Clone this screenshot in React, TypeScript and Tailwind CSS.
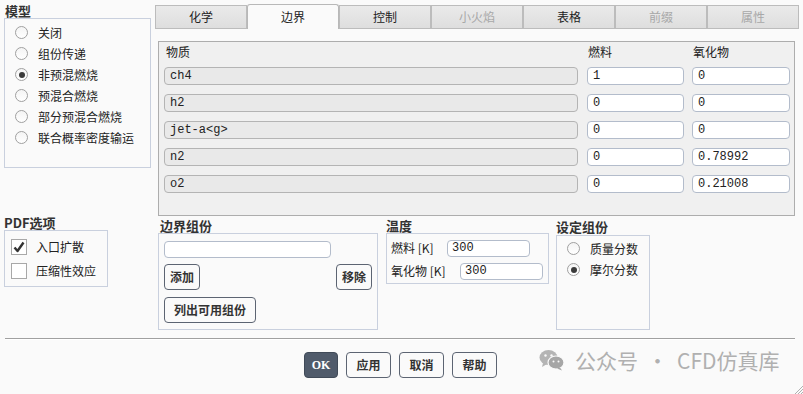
import React from "react";

const cjk = { fontFamily: '"Noto Sans CJK SC", "Noto Sans", sans-serif' };
const mono = { fontFamily: '"Liberation Mono", "Noto Sans CJK SC", monospace' };

function Radio({ checked, label }: { checked?: boolean; label: string }) {
  return (
    <div className="flex items-center h-[21px]">
      <div className="w-[13px] h-[13px] rounded-full border border-[#a0a0a0] bg-gradient-to-b from-[#f4f4f4] to-white flex items-center justify-center shrink-0">
        {checked && <div className="w-[6px] h-[6px] rounded-full bg-[#3a3a3a]" />}
      </div>
      <span className="ml-[10px] text-[12px] text-[#222] leading-none">{label}</span>
    </div>
  );
}

function Check({ checked, label }: { checked?: boolean; label: string }) {
  return (
    <div className="flex items-center h-[24px]">
      <div className="w-[16px] h-[16px] border border-[#a8a8a8] bg-white flex items-center justify-center shrink-0">
        {checked && (
          <svg width="12" height="12" viewBox="0 0 12 12">
            <path d="M1.5 6.5 L4.5 10 L10.5 1.5" fill="none" stroke="#333" strokeWidth="2.4" strokeLinejoin="round" />
          </svg>
        )}
      </div>
      <span className="ml-[9px] text-[12px] text-[#222] leading-none">{label}</span>
    </div>
  );
}

function Tab({ label, active, disabled }: { label: string; active?: boolean; disabled?: boolean }) {
  if (active)
    return (
      <div className="w-[92px] h-[25px] border border-[#b8b8b8] border-b-0 rounded-t-[3px] bg-[#fafafa] flex items-center justify-center text-[12px] text-[#222] relative z-10">
        {label}
      </div>
    );
  return (
    <div
      className={
        "w-[92px] h-[24px] mt-[1px] border border-[#bcbcbc] bg-gradient-to-b from-[#eaeaea] to-[#dedede] flex items-center justify-center text-[12px] " +
        (disabled ? "text-[#a8a8a8]" : "text-[#222]")
      }
    >
      {label}
    </div>
  );
}

function Btn({ label, className = "" }: { label: string; className?: string }) {
  return (
    <div
      className={
        "h-[26px] border border-[#5c6472] rounded-[4px] bg-[#fafafa] flex items-center justify-center text-[12px] font-bold text-[#333] " +
        className
      }
    >
      {label}
    </div>
  );
}

const species = [
  { n: "ch4", f: "1", o: "0" },
  { n: "h2", f: "0", o: "0" },
  { n: "jet-a<g>", f: "0", o: "0" },
  { n: "n2", f: "0", o: "0.78992" },
  { n: "o2", f: "0", o: "0.21008" },
];

export default function App() {
  return (
    <div className="w-[803px] h-[394px] bg-[#fafafa] relative overflow-hidden" style={cjk}>
      <div className="flex h-[338px]">
        {/* Left column */}
        <div className="w-[151px] pl-[4px] pt-[3px] shrink-0">
          <div className="h-[15px] text-[13px] font-bold leading-[15px] text-[#333] pl-[1px]">模型</div>
          <div className="w-[147px] h-[150px] border border-[#c9d0de] pl-[10px] pt-[3px]">
            <Radio label="关闭" />
            <Radio label="组份传递" />
            <Radio checked label="非预混燃烧" />
            <Radio label="预混合燃烧" />
            <Radio label="部分预混合燃烧" />
            <Radio label="联合概率密度输运" />
          </div>
          <div className="mt-[47px] h-[15px] text-[13px] font-bold leading-[15px] text-[#333]">PDF选项</div>
          <div className="w-[104px] h-[57px] border border-[#c9d0de] pl-[6px] pt-[4px]">
            <Check checked label="入口扩散" />
            <Check label="压缩性效应" />
          </div>
        </div>

        {/* Right column */}
        <div className="ml-[4px] w-[644px] pt-[4px]">
          <div className="flex h-[25px]">
            <Tab label="化学" />
            <Tab label="边界" active />
            <Tab label="控制" />
            <Tab label="小火焰" disabled />
            <Tab label="表格" />
            <Tab label="前缀" disabled />
            <Tab label="属性" disabled />
          </div>
          <div className="pl-[3px] pt-[12px]">
            {/* species panel */}
            <div className="w-[637px] h-[175px] border border-[#adadad] bg-[#f0f0f0] pl-[5px]">
              <div className="flex h-[20px] items-center text-[12px] text-[#222]">
                <div className="w-[423px] pl-[2px]">物质</div>
                <div className="w-[105px] pl-[1px]">燃料</div>
                <div className="pl-[1px]">氧化物</div>
              </div>
              <div className="mt-[5px] flex flex-col gap-[9px]">
                {species.map((s) => (
                  <div key={s.n} className="flex h-[18px]">
                    <div className="w-[414px] h-[18px] border border-[#b4b4b4] rounded-[4px] bg-[#e9e9e9] pl-[5px] flex items-center text-[12px] text-[#222]" style={mono}>
                      {s.n}
                    </div>
                    <div className="ml-[9px] w-[97px] h-[18px] border border-[#b3bccb] rounded-[4px] bg-white pl-[5px] flex items-center text-[12px] text-[#222]" style={mono}>
                      {s.f}
                    </div>
                    <div className="ml-[8px] w-[98px] h-[18px] border border-[#b3bccb] rounded-[4px] bg-white pl-[5px] flex items-center text-[12px] text-[#222]" style={mono}>
                      {s.o}
                    </div>
                  </div>
                ))}
              </div>
            </div>

            {/* lower groups */}
            <div className="flex mt-[3px]">
              <div className="w-[220px]">
                <div className="h-[14px] text-[13px] font-bold leading-[14px] text-[#333] pl-[2px]">边界组份</div>
                <div className="h-[97px] border border-[#c9d0de] pl-[5px] pt-[7px]">
                  <div className="w-[167px] h-[17px] border border-[#b3bccb] rounded-[4px] bg-white" />
                  <div className="flex justify-between w-[208px] mt-[6px]">
                    <Btn label="添加" className="w-[36px]" />
                    <Btn label="移除" className="w-[36px]" />
                  </div>
                  <Btn label="列出可用组份" className="w-[92px] mt-[7px]" />
                </div>
              </div>
              <div className="w-[163px] ml-[8px]">
                <div className="h-[14px] text-[13px] font-bold leading-[14px] text-[#333]">温度</div>
                <div className="h-[51px] border border-[#c9d0de] pl-[4px] pt-[5px] text-[12px] text-[#222]">
                  <div className="flex items-center h-[18px]">
                    <span className="w-[56px]">燃料 [K]</span>
                    <div className="w-[83px] h-[17px] border border-[#b3bccb] rounded-[4px] bg-white pl-[4px] flex items-center" style={mono}>300</div>
                  </div>
                  <div className="flex items-center h-[18px] mt-[5px]">
                    <span className="w-[69px]">氧化物 [K]</span>
                    <div className="w-[83px] h-[17px] border border-[#b3bccb] rounded-[4px] bg-white pl-[4px] flex items-center" style={mono}>300</div>
                  </div>
                </div>
              </div>
              <div className="w-[94px] ml-[7px]">
                <div className="h-[16px] text-[13px] font-bold leading-[16px] text-[#333]">设定组份</div>
                <div className="h-[95px] border border-[#c9d0de] pl-[10px] pt-[2px]">
                  <Radio label="质量分数" />
                  <Radio checked label="摩尔分数" />
                </div>
              </div>
            </div>
          </div>
        </div>
      </div>

      {/* separator */}
      <div className="ml-[5px] w-[790px] h-[2px] border-t border-[#a0a0a0] bg-white" />

      {/* buttons */}
      <div className="flex pl-[304px] mt-[12px]">
        <div className="w-[34px] h-[26px] rounded-[4px] bg-[#505b6b] border border-[#404a58] flex items-center justify-center text-[12px] font-bold text-white" style={{ fontFamily: '"Liberation Serif", serif' }}>
          OK
        </div>
        <Btn label="应用" className="w-[45px] ml-[8px]" />
        <Btn label="取消" className="w-[45px] ml-[8px]" />
        <Btn label="帮助" className="w-[45px] ml-[8px]" />
      </div>

      {/* watermark */}
      <div className="absolute left-[539px] top-[349px] flex items-center text-[#b0b0b0]">
        <svg width="26" height="22" viewBox="0 0 26 22">
          <ellipse cx="9.5" cy="8.5" rx="9" ry="7.5" fill="#b4b4b4" />
          <path d="M4 14 L3 18 L8 15 Z" fill="#b4b4b4" />
          <ellipse cx="17" cy="13.5" rx="8" ry="6.5" fill="#a6a6a6" stroke="#fafafa" strokeWidth="1.2" />
          <path d="M21 18.5 L23 21.5 L18 19.5 Z" fill="#a6a6a6" />
          <circle cx="6.5" cy="6.5" r="1.2" fill="#fafafa" />
          <circle cx="12.5" cy="6.5" r="1.2" fill="#fafafa" />
          <circle cx="14.5" cy="12.5" r="1" fill="#fafafa" />
          <circle cx="19.5" cy="12.5" r="1" fill="#fafafa" />
        </svg>
        <span className="ml-[10px] text-[21px] leading-none">公众号</span>
        <span className="mx-[9px] text-[21px] leading-none">·</span>
        <span className="text-[21px] leading-none">CFD仿真库</span>
      </div>

      {/* resize grip */}
      <svg className="absolute right-0 bottom-0" width="10" height="10" viewBox="0 0 10 10">
        <path d="M10 2 L2 10 M10 5 L5 10 M10 8 L8 10" stroke="#b0b0b0" strokeWidth="1" />
      </svg>
    </div>
  );
}
